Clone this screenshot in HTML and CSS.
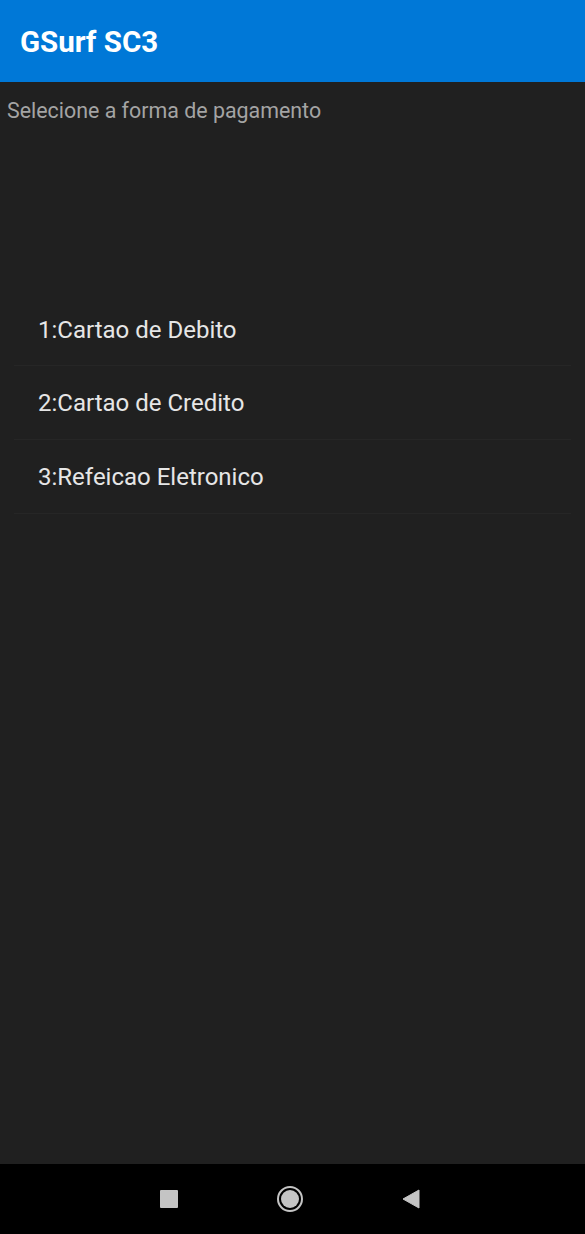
FILE: index.html
```html
<!DOCTYPE html>
<html lang="pt">
<head>
    <meta charset="UTF-8">
    <title>GSurf SC3</title>
    <link rel="stylesheet" href="styles.css">
</head>
<body>
<div class="app">
    <div class="toolbar">GSurf SC3</div>
    <div class="content">
        <p class="hint">Selecione a forma de pagamento</p>
        <ul class="menu">
            <li>1:Cartao de Debito</li>
            <li>2:Cartao de Credito</li>
            <li>3:Refeicao Eletronico</li>
        </ul>
    </div>
    <div class="navbar">
        <svg class="nav_icon" width="20" height="20" viewBox="0 0 20 20"><rect x="1" y="1" width="18" height="18" rx="1" fill="#c4c4c4"/></svg>
        <svg class="nav_icon" width="28" height="28" viewBox="0 0 28 28"><circle cx="14" cy="14" r="12" fill="none" stroke="#c4c4c4" stroke-width="2"/><circle cx="14" cy="14" r="9" fill="#c4c4c4"/></svg>
        <svg class="nav_icon" width="20" height="20" viewBox="0 0 20 20"><path d="M18 1 L18 19 L2 10 Z" fill="#c4c4c4" stroke="#c4c4c4" stroke-linejoin="round"/></svg>
    </div>
</div>
</body>
</html>
```

FILE: styles.css
```css
*{
    margin:0;
    padding:0;
    box-sizing:border-box;
}
body{
    background:#202020;
    font-family:Roboto, "Liberation Sans", sans-serif;
}
.app{
    width:585px;
    height:1234px;
    display:flex;
    flex-direction:column;
}
.toolbar{
    height:82px;
    background:#0078d7;
    color:#fff;
    font-size:29.5px;
    font-weight:bold;
    line-height:84px;
    padding-left:20px;
}
.content{
    flex:1;
    background:#202020;
}
.hint{
    color:#a4a4a4;
    font-size:21.4px;
    padding-left:7px;
    margin-top:16px;
    line-height:26px;
}
.menu{
    list-style:none;
    margin:175px 14px 0 14px;
}
.menu li{
    height:74px;
    line-height:75px;
    padding-left:24px;
    color:#e6e6e6;
    font-size:24px;
    border-bottom:1px solid #262626;
}
.menu li:first-child{
    height:67px;
    line-height:62px;
}
.navbar{
    height:70px;
    background:#000;
    display:flex;
    align-items:center;
    justify-content:center;
    gap:97px;
    padding-right:6px;
}
```
